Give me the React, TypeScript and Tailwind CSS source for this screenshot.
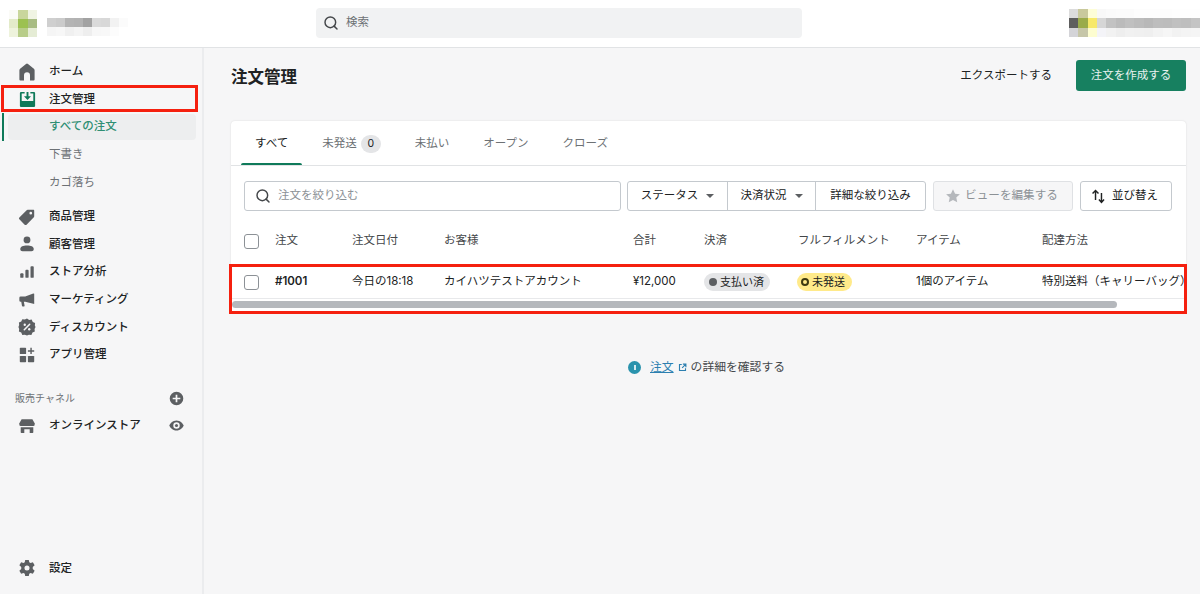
import React from "react";
import { Search } from "lucide-react";

const fontStack = "font-['Inter','Noto_Sans_CJK_JP',sans-serif]";

type IconProps = { className?: string };

const HomeIcon = ({ className }: IconProps) => (
  <svg viewBox="0 0 20 20" className={className} fill="currentColor">
    <path d="M17.600 8.200V17.400a1 1 0 0 1-1 1h-3.600v-5.200a3 3 0 0 0-6 0v5.200H3.400a1 1 0 0 1-1-1V8.200a2 2 0 0 1 .7-1.500L9 2a1.600 1.600 0 0 1 2 0l5.900 4.700a2 2 0 0 1 .7 1.500z" />
  </svg>
);

const OrdersIcon = ({ className }: IconProps) => (
  <svg viewBox="0 0 20 20" className={className} fill="currentColor">
    <path
      fillRule="evenodd"
      d="M3.200 2H7v1.700H3.900v8h12.200v-8H13V2h3.800A1.200 1.200 0 0 1 18 3.200v13.600a1.200 1.200 0 0 1-1.200 1.200H3.200A1.200 1.200 0 0 1 2 16.800V3.200A1.200 1.200 0 0 1 3.200 2z"
    />
    <path d="M9 2h2v4.500h2.700L10 10.500 6.300 6.500H9z" />
  </svg>
);

const TagIcon = ({ className }: IconProps) => (
  <svg viewBox="0 0 20 20" className={className} fill="currentColor">
    <path d="M17.500 2h-6.800a1.500 1.500 0 0 0-1.100.4L1.500 10.500a1.500 1.500 0 0 0 0 2.100l5.900 5.900a1.500 1.500 0 0 0 2.100 0l8.100-8.100a1.500 1.500 0 0 0 .4-1.100V3a1 1 0 0 0-.5-1zm-3.300 5.300a1.500 1.500 0 1 1 0-3 1.500 1.500 0 0 1 0 3z" />
  </svg>
);

const PersonIcon = ({ className }: IconProps) => (
  <svg viewBox="0 0 20 20" className={className} fill="currentColor">
    <circle cx="10" cy="5.500" r="3.800" />
    <path d="M2.500 15.500c0-2.500 3.200-3.800 7.500-3.800s7.500 1.300 7.500 3.800c0 1.600-1 2.500-2.500 2.500H5c-1.500 0-2.500-.9-2.500-2.500z" />
  </svg>
);

const BarsIcon = ({ className }: IconProps) => (
  <svg viewBox="0 0 20 20" className={className} fill="currentColor">
    <rect x="2.500" y="11.500" width="3.600" height="5" rx="1" />
    <rect x="8.200" y="7.500" width="3.600" height="9" rx="1" />
    <rect x="13.900" y="3.500" width="3.600" height="13" rx="1" />
  </svg>
);

const MegaphoneIcon = ({ className }: IconProps) => (
  <svg viewBox="0 0 20 20" className={className} fill="currentColor">
    <path d="M18 3v11.500l-1-.2-9-2.300H6.500l.8 4.100a.8.800 0 0 1-.8 1H5.200a.8.800 0 0 1-.8-.6L3.600 12H3a1.500 1.500 0 0 1-1.500-1.500V7.500A1.500 1.500 0 0 1 3 6h5l9-3.200z" />
  </svg>
);

const DiscountIcon = ({ className }: IconProps) => (
  <svg viewBox="0 0 20 20" className={className}>
    <path
      fill="currentColor"
      d="M10 .5l2.400 1.600 2.800-.3 1.200 2.600 2.600 1.200-.3 2.800L19.500 10l-1.100 2.200.3 2.800-2.600 1.200-1.200 2.600-2.800-.3L10 19.500l-2.400-1-2.800.3-1.200-2.600L1 15l.3-2.800L.5 10l.8-2.100L1 5.100l2.600-1.200 1.200-2.600 2.800.3z"
    />
    <path d="M13 7l-6 6" stroke="#f6f6f7" strokeWidth="1.700" strokeLinecap="round" />
    <circle cx="7.500" cy="7.500" r="1.300" fill="#f6f6f7" />
    <circle cx="12.500" cy="12.500" r="1.300" fill="#f6f6f7" />
  </svg>
);

const AppsIcon = ({ className }: IconProps) => (
  <svg viewBox="0 0 20 20" className={className} fill="currentColor">
    <rect x="2" y="2" width="7" height="7" rx="0.800" />
    <rect x="2" y="11" width="7" height="7" rx="0.800" />
    <rect x="11" y="11" width="7" height="7" rx="0.800" />
    <path d="M13.700 2h1.600v2.700H18v1.600h-2.700V9h-1.600V6.300H11V4.700h2.700z" />
  </svg>
);

const StoreIcon = ({ className }: IconProps) => (
  <svg viewBox="0 0 20 20" className={className} fill="currentColor">
    <path d="M4 2.500h12l2.500 4.500v1.500a1.500 1.500 0 0 1-1.500 1.500H3a1.500 1.500 0 0 1-1.500-1.500V7z" />
    <path d="M3 11.500h14V17a.8.800 0 0 1-.8.800H13v-4.300H7v4.300H3.800A.8.800 0 0 1 3 17z" />
  </svg>
);

const EyeIcon = ({ className }: IconProps) => (
  <svg viewBox="0 0 20 20" className={className} fill="currentColor">
    <path
      fillRule="evenodd"
      d="M10 4c-4.500 0-7.500 3.500-8.500 6 1 2.500 4 6 8.500 6s7.500-3.500 8.500-6c-1-2.500-4-6-8.500-6zm0 9.800a3.800 3.800 0 1 1 0-7.600 3.800 3.800 0 0 1 0 7.600z"
    />
    <circle cx="10" cy="10" r="1.800" />
  </svg>
);

const PlusCircleIcon = ({ className }: IconProps) => (
  <svg viewBox="0 0 20 20" className={className} fill="currentColor">
    <path d="M10 2a8 8 0 1 0 0 16 8 8 0 0 0 0-16zm1 9v3.500H9V11H5.500V9H9V5.500h2V9h3.500v2z" />
  </svg>
);

const GearIcon = ({ className }: IconProps) => (
  <svg viewBox="0 0 20 20" className={className} fill="currentColor">
    <path d="M8 1h4l.5 2.700 1.400.8 2.600-1 2 3.500-2.100 1.800v2.400l2.100 1.800-2 3.500-2.600-1-1.400.8L12 19H8l-.5-2.700-1.400-.8-2.600 1-2-3.500 2.100-1.800V8.800L1.500 7l2-3.500 2.600 1 1.400-.8zM10 7.200a2.800 2.800 0 1 0 0 5.600 2.800 2.800 0 0 0 0-5.600z" />
  </svg>
);

const StarIcon = ({ className }: IconProps) => (
  <svg viewBox="0 0 20 20" className={className} fill="currentColor">
    <path d="M10 1.500l2.600 5.600 6 .7-4.500 4.100 1.200 6L10 15l-5.300 2.900 1.200-6-4.500-4.100 6-.7z" />
  </svg>
);

const SortIcon = ({ className }: IconProps) => (
  <svg viewBox="0 0 20 20" className={className} fill="none" stroke="currentColor" strokeWidth="1.700">
    <path d="M6.500 14V3M3 6.500L6.500 3 10 6.500" />
    <path d="M13.500 6v11M10.500 13.500l3 3.500 3-3.500" />
  </svg>
);

const ExternalIcon = ({ className }: IconProps) => (
  <svg viewBox="0 0 12 12" className={className} fill="none" stroke="currentColor" strokeWidth="1.500">
    <path d="M5 2H2v8h8V7" />
    <path d="M6.500 1.500h4v4M10.500 1.500L5.500 6.500" />
  </svg>
);

// blurred-out account names and logos in the screenshot
const logoCells = [
  "bg-[#fbfbf7]", "bg-[#c9d69c]", "bg-[#f0f4e3]",
  "bg-[#e3ebc9]", "bg-[#9cc151]", "bg-[#a8bc83]",
  "bg-[#eef3dc]", "bg-[#b8cd89]", "bg-[#e5ecd5]",
];

const nameCells = [
  "bg-[#cfcfcf]", "bg-[#cbcbcb]", "bg-[#b4b4b4]", "bg-[#b2b2b2]", "bg-[#a2a2a2]", "bg-[#dadada]", "bg-[#d8d8d8]", "bg-[#f2f2f2]", "bg-[#fbfbfb]",
  "bg-[#f5f5f5]", "bg-[#f7f7f7]", "bg-[#f0f0f0]", "bg-[#f4f4f4]", "bg-[#eeeeee]", "bg-[#f7f7f7]", "bg-[#f8f8f8]", "bg-[#fcfcfc]", "bg-[#ffffff]",
];

const accountCells = [
  "bg-[#dcdcdc]", "bg-[#c9c99c]", "bg-[#fdfdd8]", "bg-[#f8f8f8]", "bg-[#fafafa]", "bg-[#fbfbfb]", "bg-[#fbfbfb]", "bg-[#fdfdfd]", "bg-[#fdfdfd]", "bg-[#fdfdfd]", "bg-[#fdfdfd]", "bg-[#fefefe]", "bg-[#fefefe]", "bg-[#fefefe]",
  "bg-[#5e5e5e]", "bg-[#9aab4a]", "bg-[#f7e96a]", "bg-[#d6d6d6]", "bg-[#c2c2c2]", "bg-[#bbbbbb]", "bg-[#c0c0c0]", "bg-[#bcbcbc]", "bg-[#b8b8b8]", "bg-[#bdbdbd]", "bg-[#bcbcbc]", "bg-[#c0c0c0]", "bg-[#bebebe]", "bg-[#c4c4c4]",
  "bg-[#d4d4d8]", "bg-[#c6c6a8]", "bg-[#fdfdd0]", "bg-[#f4f4f8]", "bg-[#f2f2f2]", "bg-[#eeeeee]", "bg-[#f1f1f1]", "bg-[#f0f0f0]", "bg-[#efefef]", "bg-[#f3f3f3]", "bg-[#f6f6f6]", "bg-[#f2f2f2]", "bg-[#f4f4f4]", "bg-[#f5f5f5]",
];

const TopBar = () => (
  <header className="flex h-[48px] shrink-0 items-start border-b border-[#e1e3e5] bg-white">
    <div className="flex w-[316px] shrink-0 items-start pl-[9px] pt-[10px]">
      <div className="grid w-[28px] grid-cols-3">
        {logoCells.map((c, i) => (
          <div key={i} className={`h-[9px] ${c}`} />
        ))}
      </div>
      <div className="ml-[10px] mt-[8px] grid w-[81px] grid-cols-9">
        {nameCells.map((c, i) => (
          <div key={i} className={`h-[9px] ${c}`} />
        ))}
      </div>
    </div>
    <div className="mt-2 flex h-[30px] w-[486px] items-center rounded-[4px] bg-[#f1f2f3] pl-[7px] text-[11.500px] text-[#6d7175]">
      <Search size={16} strokeWidth={2.2} className="text-[#44474a]" />
      <span className="ml-[7px]">検索</span>
    </div>
    <div className="ml-auto mt-[9px] grid w-[131px] grid-cols-14">
      {accountCells.map((c, i) => (
        <div key={i} className={`h-[9.300px] ${c}`} />
      ))}
    </div>
  </header>
);

const NavRow = ({ icon, label }: { icon: React.ReactNode; label: string }) => (
  <div className="flex h-[27.600px] items-center pl-[17px] text-[11.500px] font-medium text-[#202223]">
    <span className="flex w-5 justify-center text-[#5c5f62]">{icon}</span>
    <span className="ml-3">{label}</span>
  </div>
);

const Sidebar = () => (
  <aside className="flex w-[204px] shrink-0 flex-col border-r-2 border-[#ebecee] pt-[10px]">
    <NavRow icon={<HomeIcon className="h-5 w-5" />} label="ホーム" />
    <div className="relative">
      <NavRow icon={<OrdersIcon className="h-[19px] w-[19px] text-[#0f7a5a]" />} label="注文管理" />
      <div className="absolute left-[1px] top-[-1px] h-[27px] w-[197px] border-[3px] border-[#f5200f]" />
    </div>
    <div className="relative flex h-[27.600px] items-center pl-[2px]">
      <div className="h-full w-[2px] bg-[#0f7a5a]" />
      <div className="ml-[4px] flex h-[26px] w-[188px] items-center rounded-[4px] bg-[#edeeef] pl-[41px] text-[11.500px] font-medium text-[#2f8f73]">
        すべての注文
      </div>
    </div>
    <div className="flex h-[27.600px] items-center pl-[49px] text-[11.500px] text-[#6d7175]">下書き</div>
    <div className="flex h-[27.600px] items-center pl-[49px] text-[11.500px] text-[#6d7175]">カゴ落ち</div>
    <div className="mt-[7px]">
      <NavRow icon={<TagIcon className="h-[18px] w-[18px]" />} label="商品管理" />
      <NavRow icon={<PersonIcon className="h-[18px] w-[18px]" />} label="顧客管理" />
      <NavRow icon={<BarsIcon className="h-[18px] w-[18px]" />} label="ストア分析" />
      <NavRow icon={<MegaphoneIcon className="h-[18px] w-[18px]" />} label="マーケティング" />
      <NavRow icon={<DiscountIcon className="h-[18px] w-[18px]" />} label="ディスカウント" />
      <NavRow icon={<AppsIcon className="h-[18px] w-[18px]" />} label="アプリ管理" />
    </div>
    <div className="mt-[16px] flex h-[27.600px] items-center pl-[15px] pr-[17px] text-[10px] text-[#6d7175]">
      <span>販売チャネル</span>
      <PlusCircleIcon className="ml-auto h-[17px] w-[17px] text-[#5c5f62]" />
    </div>
    <div className="flex h-[27.600px] items-center pr-[17px]">
      <div className="flex-1">
        <NavRow icon={<StoreIcon className="h-[18px] w-[18px]" />} label="オンラインストア" />
      </div>
      <EyeIcon className="h-[17px] w-[17px] text-[#5c5f62]" />
    </div>
    <div className="mb-[12px] mt-auto">
      <NavRow icon={<GearIcon className="h-[18px] w-[18px]" />} label="設定" />
    </div>
  </aside>
);

const Tab = ({ label, count, active }: { label: string; count?: number; active?: boolean }) => (
  <div
    className={`relative flex h-[44px] items-center px-[14px] pt-[2px] text-[11.500px] ${active ? "text-[#202223]" : "text-[#6d7175]"}`}
  >
    {label}
    {count !== undefined && (
      <span className="ml-1 flex h-[18px] w-5 items-center justify-center rounded-full bg-[#e4e5e7] text-[10.500px] text-[#202223]">
        {count}
      </span>
    )}
    {active && <div className="absolute bottom-0 left-0 right-0 h-[2px] rounded-t bg-[#0f7a5a]" />}
  </div>
);

const Caret = () => <span className="ml-2 h-0 w-0 border-x-[4px] border-t-[4px] border-x-transparent border-t-[#5c5f62]" />;

const Checkbox = () => <div className="h-[15px] w-[15px] rounded-[3px] border-[1.500px] border-[#8c9196] bg-white" />;

const tableGrid = "grid grid-cols-[31px_77px_92px_189px_71px_94px_118px_126px_1fr] items-center pl-[13px]";

const OrdersCard = () => (
  <div className="relative">
    <div className="overflow-hidden rounded-t-[4px] bg-white shadow-[0_0_2px_rgba(0,0,0,0.12)]">
      <div className="flex gap-[6px] border-b border-[#e1e3e5] pl-[10px]">
        <Tab label="すべて" active />
        <Tab label="未発送" count={0} />
        <Tab label="未払い" />
        <Tab label="オープン" />
        <Tab label="クローズ" />
      </div>
      <div className="flex items-center pl-[13px] pr-[14px] pt-[15px]">
        <div className="flex h-[30px] flex-1 items-center rounded-[3px] border border-[#c4c9ce] pl-[10px] text-[11.500px] text-[#8c9196]">
          <Search size={16} strokeWidth={2.2} className="text-[#44474a]" />
          <span className="ml-[7px]">注文を絞り込む</span>
        </div>
        <div className="ml-[6px] flex h-[30px] rounded-[3px] border border-[#c4c9ce] text-[11.500px] text-[#202223]">
          <div className="flex w-[100px] items-center justify-center border-r border-[#c4c9ce]">
            ステータス
            <Caret />
          </div>
          <div className="flex w-[88px] items-center justify-center border-r border-[#c4c9ce]">
            決済状況
            <Caret />
          </div>
          <div className="flex w-[109px] items-center justify-center">詳細な絞り込み</div>
        </div>
        <div className="ml-[7px] flex h-[30px] w-[140px] items-center justify-center rounded-[3px] border border-[#dfe1e4] bg-[#f6f6f7] pr-[3px] text-[11.600px] text-[#8c9196]">
          <StarIcon className="mr-[4px] h-[16px] w-[16px] text-[#b5b8bc]" />
          ビューを編集する
        </div>
        <div className="ml-[7px] flex h-[30px] w-[92px] items-center justify-center rounded-[3px] border border-[#c4c9ce] pr-[4px] text-[11.500px] text-[#202223]">
          <SortIcon className="mr-[5px] h-[17px] w-[17px]" />
          並び替え
        </div>
      </div>
      <div className={`${tableGrid} h-[53px] pt-[7px] text-[11.500px] text-[#44474a]`}>
        <Checkbox />
        <span>注文</span>
        <span>注文日付</span>
        <span>お客様</span>
        <span>合計</span>
        <span>決済</span>
        <span>フルフィルメント</span>
        <span>アイテム</span>
        <span>配達方法</span>
      </div>
      <div className={`${tableGrid} h-[35px] whitespace-nowrap border-y border-[#e8e9eb] pt-px text-[11.500px] text-[#202223]`}>
        <Checkbox />
        <span className="font-semibold">#1001</span>
        <span>今日の18:18</span>
        <span>カイハツテストアカウント</span>
        <span>¥12,000</span>
        <span className="flex h-[18px] w-[66px] items-center rounded-full bg-[#e4e5e7] pl-[5px] text-[11px]">
          <span className="h-[8px] w-[8px] rounded-full bg-[#5c5f62]" />
          <span className="ml-[3px]">支払い済</span>
        </span>
        <span className="-ml-px flex h-[18px] w-[55px] items-center rounded-full bg-[#ffea8a] pl-[4px] text-[11px]">
          <span className="h-[8px] w-[8px] rounded-full border-[2px] border-[#3d3a10]" />
          <span className="ml-[3px]">未発送</span>
        </span>
        <span>1個のアイテム</span>
        <span>特別送料（キャリーバッグ）</span>
      </div>
      <div className="h-[13px] pl-px pt-[2px]">
        <div className="h-[7px] w-[885px] rounded-full bg-[#b5b8bc]" />
      </div>
    </div>
    <div className="absolute bottom-[-2px] left-[-2px] right-[-1px] h-[50px] border-[3px] border-[#f5200f]" />
  </div>
);

const Hint = () => (
  <div className="mt-[47px] flex items-center justify-center pr-[4px] text-[11.800px] text-[#44474a]">
    <span className="flex h-[13px] w-[13px] items-center justify-center rounded-full bg-[#2a93ad]">
      <span className="h-[5px] w-[2px] bg-white/80" />
    </span>
    <span className="ml-[9px] text-[#2c7fb0] underline">注文</span>
    <ExternalIcon className="ml-[4px] h-[9px] w-[9px] text-[#2c7fb0]" />
    <span className="ml-[4px]">の詳細を確認する</span>
  </div>
);

const App = () => (
  <div className={`flex h-[594px] w-[1200px] flex-col overflow-hidden bg-[#f6f6f7] ${fontStack}`}>
    <TopBar />
    <div className="flex min-h-0 flex-1">
      <Sidebar />
      <main className="min-w-0 flex-1 pl-[27px] pr-[14px] pt-[12px]">
        <div className="mb-[30px] flex h-[31px] items-center">
          <h1 className="pt-[3px] text-[16.500px] font-semibold text-[#202223]">注文管理</h1>
          <span className="ml-auto text-[11.500px] text-[#202223]">エクスポートする</span>
          <button className="ml-6 h-[31px] w-[110px] rounded-[3px] bg-[#178060] text-[11.500px] text-white/90">
            注文を作成する
          </button>
        </div>
        <OrdersCard />
        <Hint />
      </main>
    </div>
  </div>
);

export default App;
